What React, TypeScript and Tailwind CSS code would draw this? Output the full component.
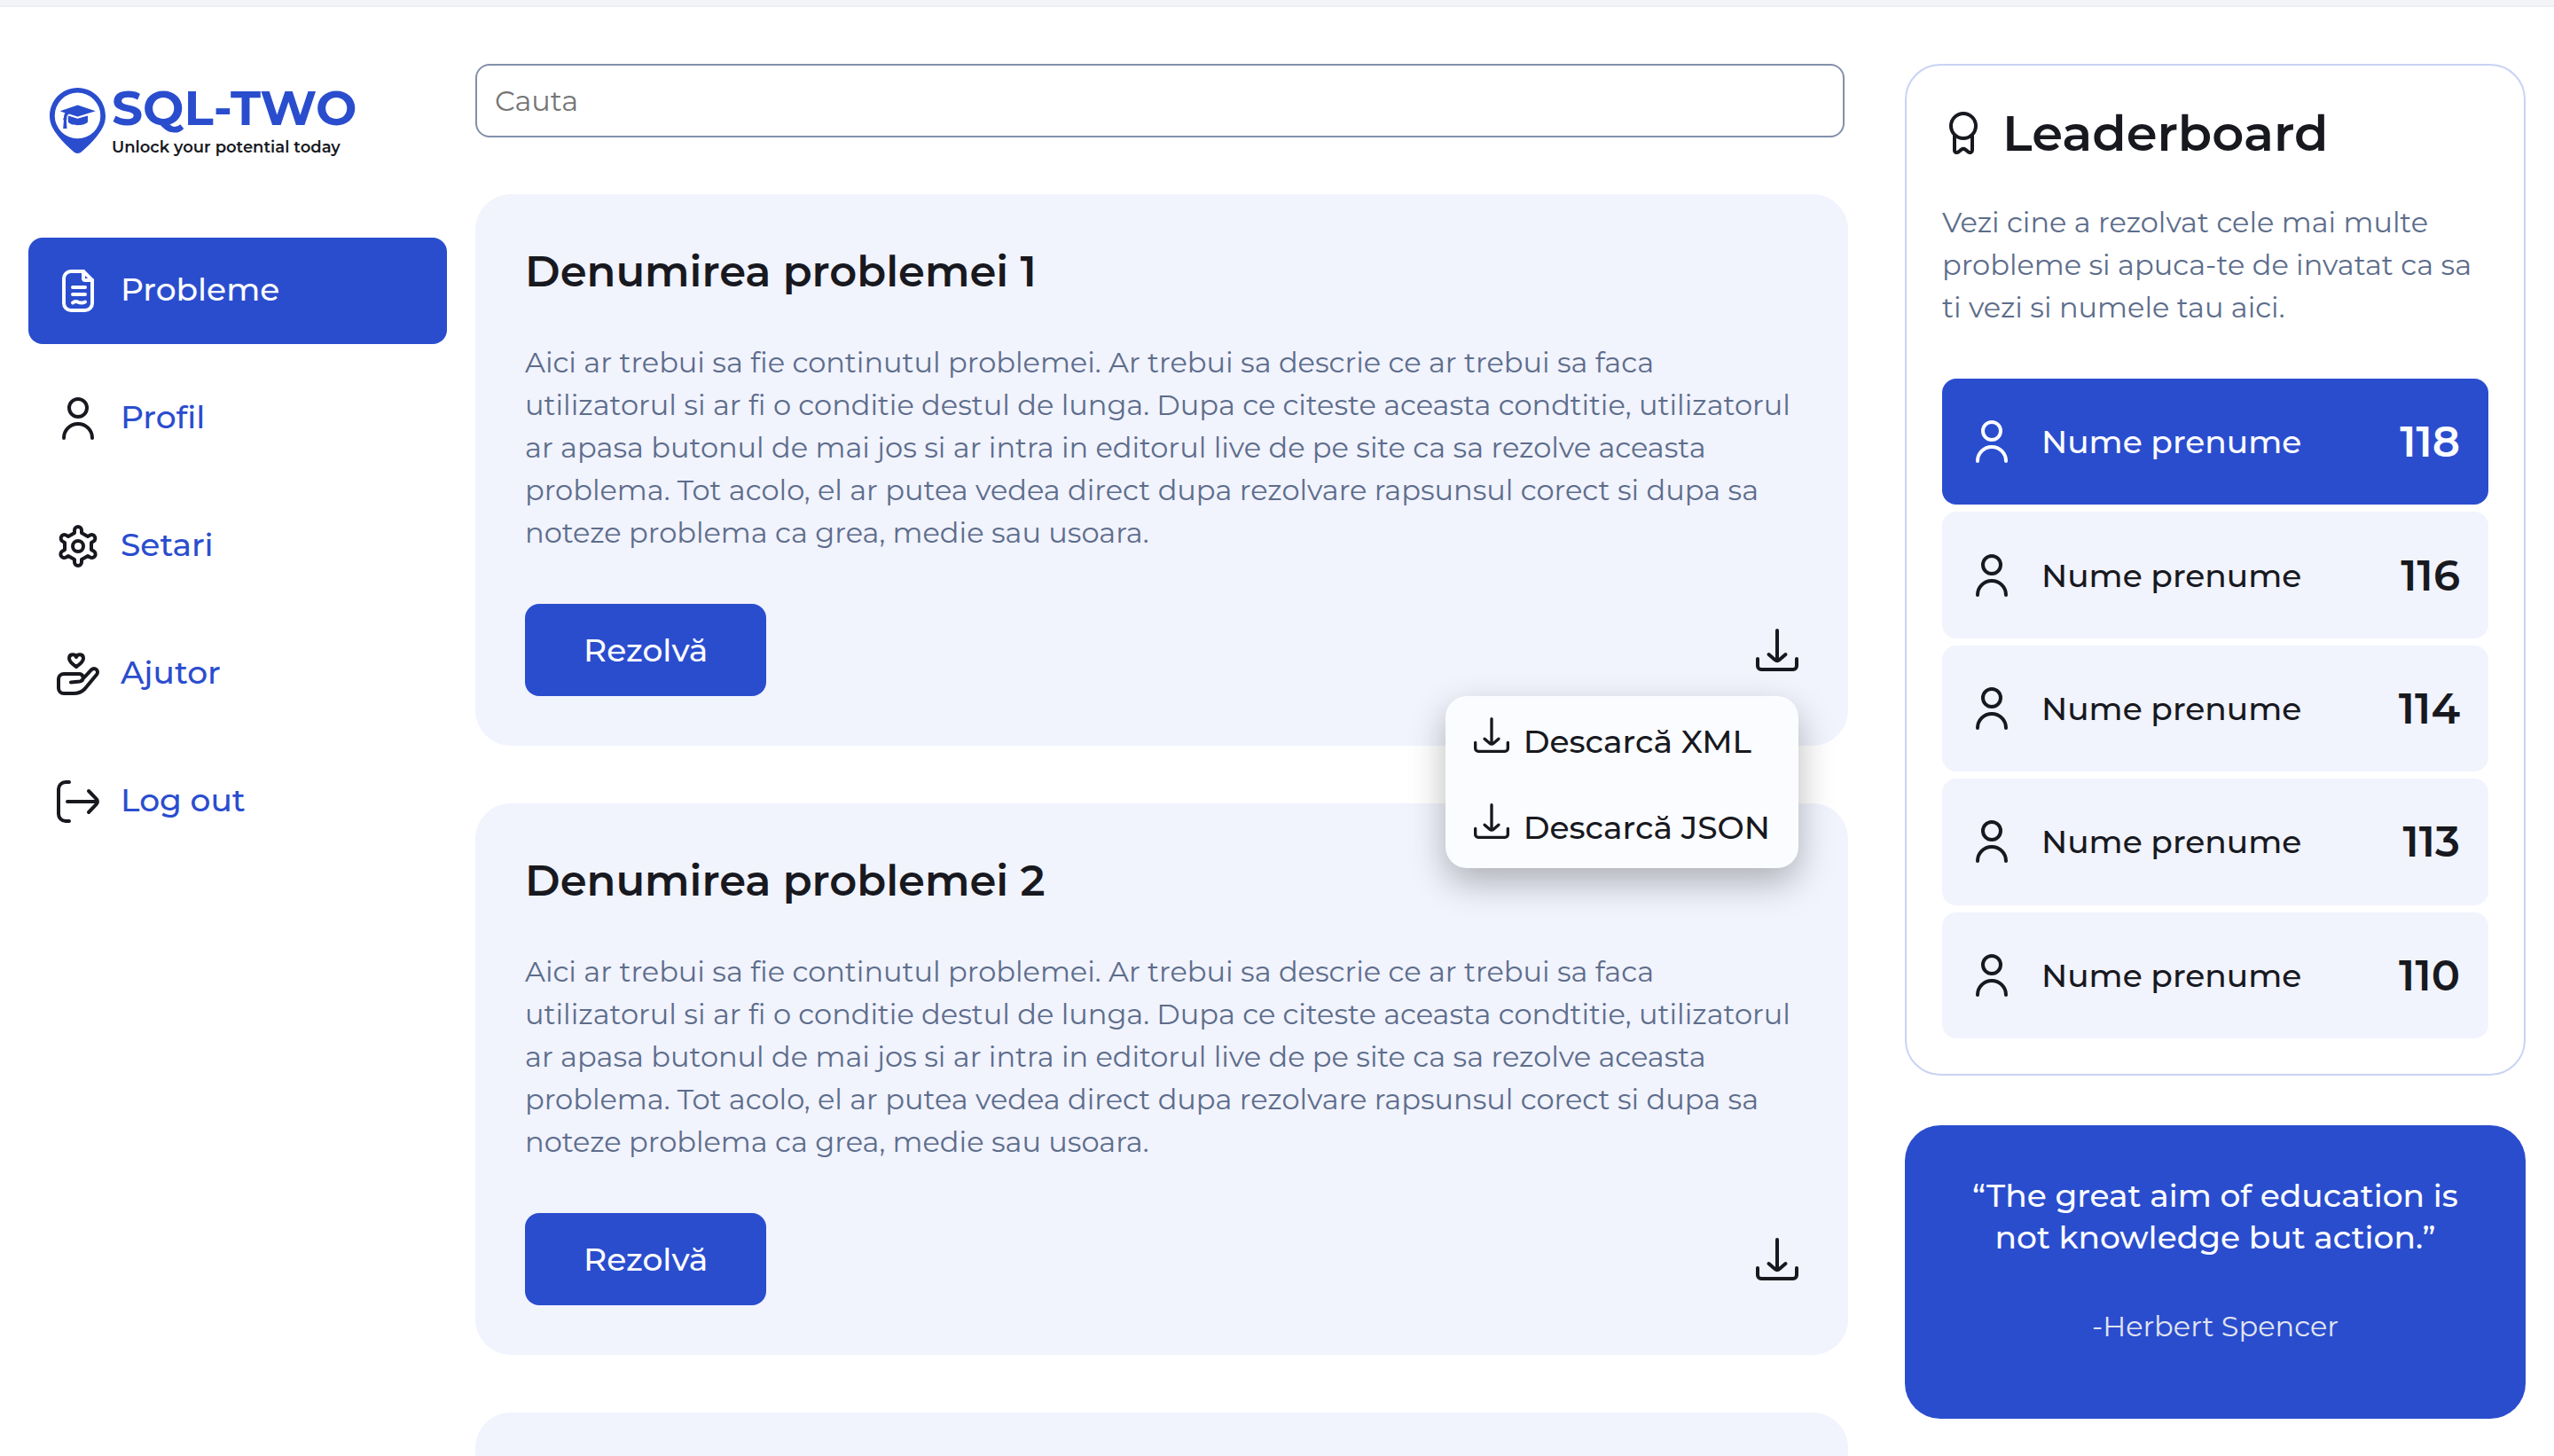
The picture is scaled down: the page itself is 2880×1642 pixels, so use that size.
import type { ReactNode } from "react";

type IconProps = { className?: string };

function Icon({ className = "size-12", children }: IconProps & { children: ReactNode }) {
  return (
    <svg
      viewBox="0 0 48 48"
      fill="none"
      stroke="currentColor"
      strokeWidth={4}
      strokeLinecap="round"
      strokeLinejoin="round"
      aria-hidden="true"
      className={`shrink-0 ${className}`}
    >
      {children}
    </svg>
  );
}

function DocumentIcon() {
  return (
    <Icon>
      <path d="M30 2H16a8 8 0 0 0-8 8v28a8 8 0 0 0 8 8h16a8 8 0 0 0 8-8V12L30 2Z" />
      <path d="M30 2v8a2 2 0 0 0 2 2h8" />
      <path d="M18 20h14M18 28h14M18 37.500c2-1.800 4-2 6-.8 3 1.400 5 1.400 8-.2" />
    </Icon>
  );
}

function UserIcon() {
  return (
    <Icon>
      <circle cx="24" cy="12" r="10" />
      <path d="M8 46a16 16 0 0 1 32 0" />
    </Icon>
  );
}

function GearIcon() {
  return (
    <Icon>
      <circle cx="24" cy="24" r="6" />
      <path d="M20 9V6a4 4 0 0 1 8 0v3l7 4 2.600-1.500a4 4 0 0 1 4 6.900L39 20v8l2.600 1.500a4 4 0 0 1-4 7L35 35l-7 4v3a4 4 0 0 1-8 0v-3l-7-4-2.600 1.500a4 4 0 0 1-4-7L9 28v-8l-2.600-1.600a4 4 0 0 1 4-6.900L13 13l7-4Z" />
    </Icon>
  );
}

function HandHeartIcon() {
  return (
    <Icon>
      <path d="M22 5c1.500-4 8-3.800 8 1.500 0 4-4.500 7-8 9.500-3.500-2.500-8-5.500-8-9.500C14 1.200 20.500 1 22 5Z" />
      <path d="M16 33.500l10-1a4.300 4.300 0 0 0 0-8.500H8a6 6 0 0 0-6 6v10a6 6 0 0 0 6 6h11c5 0 9-1.500 12.500-5L45 24.700a4 4 0 0 0-5.800-5.500L30 29" />
    </Icon>
  );
}

function LogoutIcon() {
  return (
    <Icon>
      <path d="M14 2h-4a8 8 0 0 0-8 8v28a8 8 0 0 0 8 8h4" />
      <path d="M12 24h34M36 12l8.800 9.200a4 4 0 0 1 0 5.600L36 36" />
    </Icon>
  );
}

function DownloadIcon({ className }: IconProps) {
  return (
    <Icon className={className}>
      <path d="M24 2v34M14.500 29l6.900 6a4 4 0 0 0 5.200 0l6.900-6" />
      <path d="M2 34v8a4 4 0 0 0 4 4h36a4 4 0 0 0 4-4v-8" />
    </Icon>
  );
}

function MedalIcon() {
  return (
    <Icon>
      <circle cx="24" cy="16" r="14" />
      <path d="M14 27v16.500c0 2.300 2.500 3.200 4.400 1.800l3.400-2.600a3.600 3.600 0 0 1 4.400 0l3.400 2.600c1.900 1.400 4.400.5 4.400-1.800V27" />
    </Icon>
  );
}

function LogoMark() {
  return (
    <svg viewBox="0 0 63 74" fill="currentColor" aria-hidden="true" className="w-[63px] shrink-0">
      <path
        fillRule="evenodd"
        d="M31.500 0C14 0 0 14 0 32c0 9 4.500 16 10 23 4.500 5.600 10.500 11.500 16 16.200 2 1.700 3.600 2.800 5.500 2.800s3.500-1.100 5.500-2.800c5.500-4.700 11.500-10.600 16-16.200 5.500-7 10-14 10-23C63 14 49 0 31.500 0Zm0 5.600a25.800 25.800 0 1 1 0 51.600 25.800 25.800 0 0 1 0-51.600Z"
      />
      <path d="M31.500 19.600 51.800 26.200 31.500 32.500 22 29.500c-1.800.8-2.600 2-2.700 4l.1 1.800-.5 1.700.6 9h-4.300l.7-9-.7-1.700.8-1.800c0-2 .4-3.600 1.500-5L11.700 26.200Z" />
      <path d="M20.800 31.500 31.500 34.800 43 31.500v6.800c-1.500 2.500-6 3.900-11.400 3.900s-9.500-1.400-10.800-3.900Z" />
    </svg>
  );
}

const navItems = [
  { label: "Probleme", icon: <DocumentIcon />, active: true },
  { label: "Profil", icon: <UserIcon />, active: false },
  { label: "Setari", icon: <GearIcon />, active: false },
  { label: "Ajutor", icon: <HandHeartIcon />, active: false },
  { label: "Log out", icon: <LogoutIcon />, active: false },
];

const problems = [
  { title: "Denumirea problemei 1", menuOpen: true },
  { title: "Denumirea problemei 2", menuOpen: false },
  { title: "Denumirea problemei 3", menuOpen: false },
];

const leaders = [118, 116, 114, 113, 110];

function Sidebar() {
  return (
    <aside className="flex w-[472px] shrink-0 flex-col pt-[86px]">
      <a href="#" className="flex items-center gap-[7px] pl-6 text-[#2a4dce]">
        <LogoMark />
        <span className="flex flex-col gap-1 whitespace-nowrap">
          <span className="text-[55px] leading-[56px] font-bold">SQL-TWO</span>
          <span className="text-[18px] leading-6 font-semibold text-[#18191f]">
            Unlock your potential today
          </span>
        </span>
      </a>
      <nav className="mt-[90px] flex flex-col gap-6">
        {navItems.map(({ label, icon, active }) => (
          <a
            key={label}
            href="#"
            aria-current={active ? "page" : undefined}
            className={
              active
                ? "flex h-[120px] items-center gap-6 rounded-2xl bg-[#2a4dce] px-8 text-[#fbfcff]"
                : "flex h-[120px] items-center gap-6 rounded-2xl px-8 text-[#18191f]"
            }
          >
            {icon}
            <span
              className={
                active
                  ? "pb-1 text-4xl font-medium"
                  : "pb-1 text-4xl font-medium text-[#2a4dce]"
              }
            >
              {label}
            </span>
          </a>
        ))}
      </nav>
    </aside>
  );
}

function DownloadMenu() {
  return (
    <div className="absolute top-full right-0 z-10 flex flex-col rounded-3xl bg-[#fbfcff] shadow-[0_16px_40px_rgba(0,0,0,0.28)]">
      {["XML", "JSON"].map((format) => (
        <button
          key={format}
          type="button"
          className="flex items-baseline gap-4 px-8 py-6 text-4xl leading-[44px] font-medium whitespace-nowrap"
        >
          <DownloadIcon className="size-10" />
          Descarcă {format}
        </button>
      ))}
    </div>
  );
}

function ProblemCard({ title, menuOpen }: { title: string; menuOpen: boolean }) {
  return (
    <article className="rounded-[40px] bg-[#f1f3fd] p-14">
      <h2 className="text-5xl leading-[62px] font-semibold">{title}</h2>
      <p className="mt-12 text-[32px] leading-[48px] text-[#5d6d8b]">
        Aici ar trebui sa fie continutul problemei. Ar trebui sa descrie ce ar trebui sa faca
        utilizatorul si ar fi o conditie destul de lunga. Dupa ce citeste aceasta condtitie,
        utilizatorul ar apasa butonul de mai jos si ar intra in editorul live de pe site ca sa
        rezolve aceasta problema. Tot acolo, el ar putea vedea direct dupa rezolvare rapsunsul
        corect si dupa sa noteze problema ca grea, medie sau usoara.
      </p>
      <div className="mt-14 flex justify-between">
        <button
          type="button"
          className="h-[104px] rounded-2xl bg-[#2a4dce] px-[66px] text-4xl font-medium text-[#fbfcff]"
        >
          Rezolvă
        </button>
        <div className="relative flex items-center">
          <button type="button" aria-label="Descarcă" aria-expanded={menuOpen}>
            <DownloadIcon />
          </button>
          {menuOpen && <DownloadMenu />}
        </div>
      </div>
    </article>
  );
}

function Leaderboard() {
  return (
    <section className="rounded-[40px] border-2 border-[#c8d3f5] p-10">
      <h2 className="flex items-center gap-5 text-[56px] leading-[72px] font-semibold">
        <MedalIcon />
        Leaderboard
      </h2>
      <p className="mt-[41px] text-[32px] leading-[48px] text-[#5d6d8b]">
        Vezi cine a rezolvat cele mai multe probleme si apuca-te de invatat ca sa ti vezi si numele
        tau aici.
      </p>
      <ol className="mt-14 grid min-h-[744px] auto-rows-fr gap-2">
        {leaders.map((score, index) => (
          <li
            key={score}
            className={
              index === 0
                ? "flex items-center gap-8 rounded-2xl bg-[#2a4dce] px-8 text-[#fbfcff]"
                : "flex items-center gap-8 rounded-2xl bg-[#f1f3fd] px-8"
            }
          >
            <UserIcon />
            <span className="grow text-4xl font-medium">Nume prenume</span>
            <span className="text-5xl font-semibold">{score}</span>
          </li>
        ))}
      </ol>
    </section>
  );
}

function Quote() {
  return (
    <figure className="rounded-[40px] bg-[#2a4dce] px-14 pt-14 pb-20 text-center">
      <blockquote className="text-4xl leading-[47px] font-medium text-[#fbfcff]">
        “The great aim of education is not knowledge but action.”
      </blockquote>
      <figcaption className="mt-[53px] text-[32px] leading-[48px] text-[#e1e5ef]">
        -Herbert Spencer
      </figcaption>
    </figure>
  );
}

export default function App() {
  return (
    <div className="h-screen overflow-hidden bg-white font-[Montserrat,Inter,sans-serif] text-[#18191f]">
      <div className="h-2 border-b-2 border-[#ededf3] bg-[#f3f4f7]" />
      <div className="flex px-8">
        <Sidebar />
        <main className="ml-8 flex min-w-0 flex-1 flex-col pt-16">
          <input
            type="search"
            aria-label="Cauta"
            placeholder="Cauta"
            className="mr-1 h-[83px] rounded-2xl border-2 border-[#8290ab] px-5 text-[32px] placeholder:text-[#757575]"
          />
          <div className="mt-16 flex flex-col gap-[65px]">
            {problems.map((problem) => (
              <ProblemCard key={problem.title} {...problem} />
            ))}
          </div>
        </main>
        <div className="ml-16 flex w-[700px] shrink-0 flex-col gap-14 pt-16">
          <Leaderboard />
          <Quote />
        </div>
      </div>
    </div>
  );
}
